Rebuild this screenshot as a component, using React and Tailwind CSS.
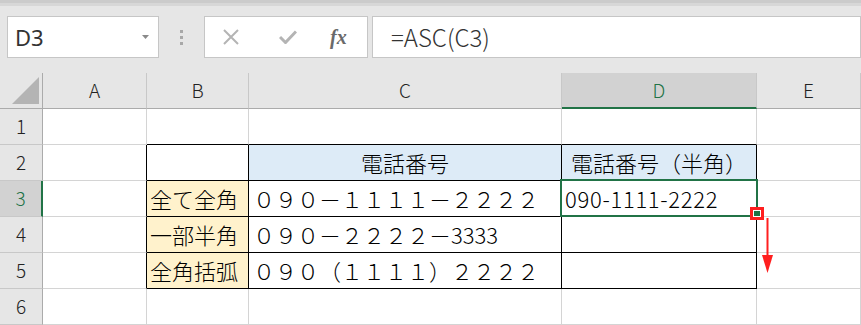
import React from 'react';

const Cell = ({ r = 'g', b = 'g', bg = 'bg-white', className = '', children }) => (
  <div
    className={`flex items-center border-r border-b ${r === 'k' ? 'border-r-black' : 'border-r-[#d4d4d4]'} ${
      b === 'k' ? 'border-b-black' : 'border-b-[#d4d4d4]'
    } ${bg} ${className}`}
  >
    {children}
  </div>
);

const ColHead = ({ label, active }) => (
  <div
    className={`flex items-center justify-center border-r border-r-[#c8c8c8] text-[19px] font-light ${
      active
        ? 'border-b-2 border-b-[#217346] bg-[#d2d2d2] text-[#217346]'
        : 'border-b border-b-[#ababab] bg-[#e6e6e6] text-[#222]'
    }`}
  >
    {label}
  </div>
);

const RowHead = ({ n, active }) => (
  <div
    className={`flex items-center justify-center border-b border-b-[#c8c8c8] text-[19px] font-light ${
      active
        ? 'border-r-2 border-r-[#217346] bg-[#d2d2d2] text-[#217346]'
        : 'border-r border-r-[#ababab] bg-[#e6e6e6] text-[#222]'
    }`}
  >
    {n}
  </div>
);

export default function App() {
  return (
    <div className="relative h-[325px] w-[861px] overflow-hidden bg-white font-['Noto_Sans_CJK_JP',sans-serif] text-black">
      {/* Ribbon / formula bar */}
      <div className="h-[73px] bg-[#e6e6e6]">
        <div className="h-[3px] bg-[#cbcbcb]" />
        <div className="h-[3px] bg-[#d7d7d7]" />
        <div className="mt-[10px] flex h-[42px]">
          {/* Name box */}
          <div className="ml-[7px] flex w-[152px] items-center justify-between border border-[#c6c6c6] bg-white pl-[7px] pr-[9px]">
            <span className="font-['Noto_Sans',sans-serif] text-[22px] text-[#333]">D3</span>
            <svg width="7" height="4" viewBox="0 0 7 4">
              <polygon points="0,0 7,0 3.5,4" fill="#8a8a8a" />
            </svg>
          </div>

          {/* Grip dots */}
          <div className="flex w-[45px] flex-col items-center justify-center gap-[3px]">
            <div className="h-[3px] w-[3px] bg-[#a8a8a8]" />
            <div className="h-[3px] w-[3px] bg-[#a8a8a8]" />
            <div className="h-[3px] w-[3px] bg-[#a8a8a8]" />
          </div>

          {/* Cancel / Enter / fx */}
          <div className="flex w-[164px] items-center border border-[#c6c6c6] bg-white">
            <svg className="ml-[18px]" width="16" height="16" viewBox="0 0 16 16">
              <path d="M1 1L15 15M15 1L1 15" stroke="#b4b4b4" strokeWidth="2" />
            </svg>
            <svg className="ml-[40px]" width="18" height="14" viewBox="0 0 18 14">
              <path d="M1 7L6.5 12.5L17 1.5" stroke="#b4b4b4" strokeWidth="3" fill="none" />
            </svg>
            <span className="ml-[33px] font-['Liberation_Serif',serif] text-[20px] font-bold italic text-[#6a6a6a]">
              fx
            </span>
          </div>

          {/* Formula */}
          <div className="ml-[4px] flex flex-1 items-center border border-[#c6c6c6] bg-white pl-[18px]">
            <span className="text-[24px] font-light text-[#333]">=ASC(C3)</span>
          </div>
        </div>
      </div>

      {/* Sheet */}
      <div className="grid grid-cols-[43px_104px_102px_313px_195px_1fr] grid-rows-[repeat(7,36px)] font-light">
        {/* Column headers */}
        <div className="relative border-r border-b border-[#ababab] bg-[#e6e6e6]">
          <svg className="absolute left-0 top-0" width="42" height="35" viewBox="0 0 42 35">
            <polygon points="39,4 39,31 12,31" fill="#b4b4b4" />
          </svg>
        </div>
        <ColHead label="A" />
        <ColHead label="B" />
        <ColHead label="C" />
        <ColHead label="D" active />
        <ColHead label="E" />

        {/* Row 1 */}
        <RowHead n="1" />
        <Cell />
        <Cell b="k" />
        <Cell b="k" />
        <Cell b="k" />
        <Cell />

        {/* Row 2 */}
        <RowHead n="2" />
        <Cell r="k" />
        <Cell r="k" b="k" />
        <Cell r="k" b="k" bg="bg-[#ddebf7]" className="justify-center text-[22px]">
          電話番号
        </Cell>
        <Cell r="k" b="k" bg="bg-[#ddebf7]" className="justify-center text-[22px]">
          電話番号（半角）
        </Cell>
        <Cell />

        {/* Row 3 */}
        <RowHead n="3" active />
        <Cell r="k" />
        <Cell r="k" b="k" bg="bg-[#fff2cc]" className="pl-[3px] text-[22px]">
          全て全角
        </Cell>
        <Cell r="k" b="k" className="pl-[4px] text-[22px]">
          ０９０－１１１１－２２２２
        </Cell>
        <Cell r="k" b="k" className="pl-[3px] text-[22px] tracking-[0.7px]">
          090-1111-2222
        </Cell>
        <Cell />

        {/* Row 4 */}
        <RowHead n="4" />
        <Cell r="k" />
        <Cell r="k" b="k" bg="bg-[#fff2cc]" className="pl-[3px] text-[22px]">
          一部半角
        </Cell>
        <Cell r="k" b="k" className="pl-[4px] text-[22px]">
          ０９０－２２２２－3333
        </Cell>
        <Cell r="k" b="k" />
        <Cell />

        {/* Row 5 */}
        <RowHead n="5" />
        <Cell r="k" />
        <Cell r="k" b="k" bg="bg-[#fff2cc]" className="pl-[3px] text-[22px]">
          全角括弧
        </Cell>
        <Cell r="k" b="k" className="pl-[4px] text-[22px]">
          ０９０（１１１１）２２２２
        </Cell>
        <Cell r="k" b="k" />
        <Cell />

        {/* Row 6 */}
        <RowHead n="6" />
        <Cell />
        <Cell />
        <Cell />
        <Cell />
        <Cell />
      </div>

      {/* Active cell outline */}
      <div className="absolute left-[560px] top-[179px] h-[38px] w-[198px] border-2 border-[#217346]" />

      {/* Fill handle highlight */}
      <div className="absolute left-[750px] top-[207px] h-[13px] w-[14px] border-[3px] border-[#ff1f1f] bg-white p-[1px]">
        <div className="h-full w-full bg-[#217346]" />
      </div>

      {/* Drag arrow */}
      <svg className="absolute left-[760px] top-[218px]" width="16" height="58" viewBox="0 0 16 58">
        <line x1="7.5" y1="0" x2="7.5" y2="40" stroke="#ff1f1f" strokeWidth="2" />
        <polygon points="2,37 13,37 7.5,55" fill="#ff1f1f" />
      </svg>
    </div>
  );
}
